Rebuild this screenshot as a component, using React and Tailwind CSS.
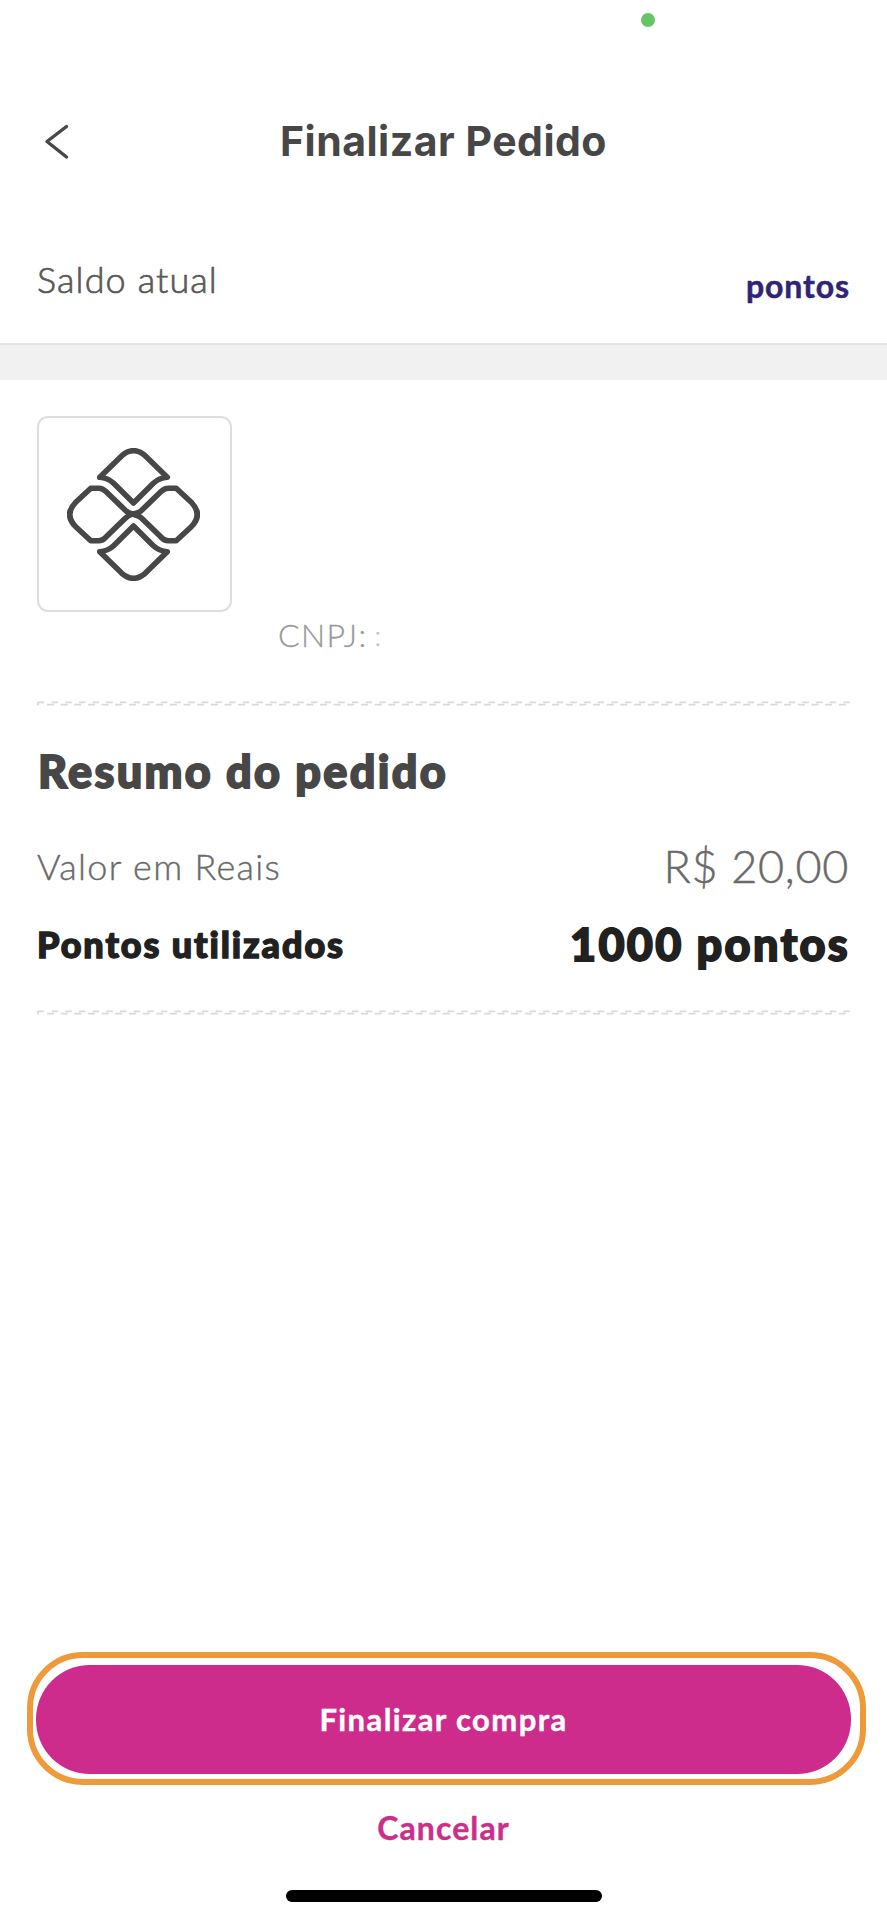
const PixIcon = () => (
  <svg className="mr-[2px] size-[133px]" viewBox="0 0 134 134" fill="none" stroke="#474747" strokeWidth="5.600" strokeLinejoin="round" strokeLinecap="round">
    <path d="M33 29.500 L55 8 Q67 -2.500 79 8 L101 29.500 Q93 30 87 35.500 L67 55.500 L47 35.500 Q41 30 33 29.500 Z" />
    <path d="M33 104.500 L55 126 Q67 136.500 79 126 L101 104.500 Q93 104 87 98.500 L67 78.500 L47 98.500 Q41 104 33 104.500 Z" />
    <path d="M24 40.500 L32 40.500 Q36 40.500 39.500 44 L58.500 62.500 Q61 65.500 66 66.500 Q61 68.500 58.500 71 L39.500 89.500 Q36 93.500 32 93.500 L24 93.500 L8.500 79 Q-3 67 8.500 55 Z" />
    <path d="M110 40.500 L102 40.500 Q98 40.500 94.500 44 L75.500 62.500 Q73 65.500 66 66.500 Q73 68.500 75.500 71 L94.500 89.500 Q98 93.500 102 93.500 L110 93.500 L125.500 79 Q137 67 125.500 55 Z" />
  </svg>
);

const DashedDivider = () => (
  <svg className="block h-[5px] w-[813px]" viewBox="0 0 813 5" fill="none" stroke="#d9d9d9" strokeWidth="1.8">
    <path d="M1 4.500 V1.300 H7" />
    <path d="M10 3.700 H811" strokeDasharray="7 6.65" />
    <path d="M14.700 1.300 H813" strokeDasharray="6.5 7.15" />
  </svg>
);

const App = () => {
  return (
    <div className="flex h-[1920px] w-[887px] flex-col overflow-hidden bg-white font-['Lato',sans-serif]">
      {/* Status bar */}
      <div className="flex h-[80px] pl-[641px] pt-[13px]">
        <span className="size-[14px] rounded-full bg-[#65c466]"></span>
      </div>

      {/* Header */}
      <header className="grid h-[123px] grid-cols-[100px_1fr_100px] items-start">
        <button className="mt-[44px] ml-[43px] w-[26px]">
          <svg className="h-[36px] w-[26px]" viewBox="0 0 26 36" fill="none" stroke="#474747" strokeWidth="3.4" strokeLinecap="round" strokeLinejoin="round">
            <path d="M23.500 2.500 L4 17.500 L23.500 33" />
          </svg>
        </button>
        <h1 className="mt-[36px] text-center font-['Inter',sans-serif] text-[41px] leading-[50px] font-bold tracking-[0.5px] whitespace-nowrap text-[#474747]">
          Finalizar Pedido
        </h1>
      </header>

      {/* Balance */}
      <section className="flex h-[140px] items-start justify-between px-[37px] pt-[52px]">
        <span className="mt-[2px] text-[36px] leading-[44px] font-light tracking-[1.1px] text-[#595959] [-webkit-text-stroke:0.7px]">Saldo atual</span>
        <span className="mt-[11px] text-[32px] leading-[40px] font-bold tracking-[0.9px] text-[#2f2476] [-webkit-text-stroke:0.5px]">pontos</span>
      </section>
      <div className="h-[37px] border-t-2 border-[#e4e4e4] bg-[#f1f1f1]"></div>

      <main className="flex flex-col px-[37px] pt-[36px]">
        <div className="flex h-[285px] items-start">
          <div className="flex h-[196px] w-[195px] items-center justify-center rounded-[11px] border-2 border-[#dedede]">
            <PixIcon />
          </div>
          <div className="mt-[199px] ml-[46px] flex items-center text-[32px] leading-[40px] font-light text-[#999999] [-webkit-text-stroke:0.3px]">
            <span className="tracking-[1.4px]">CNPJ:</span>
            <span className="ml-[7px] text-[28px] text-[#c4c4c4]">:</span>
          </div>
        </div>

        <DashedDivider />

        <h2 className="mt-[38px] ml-px text-[45px] leading-[54px] font-black tracking-[2.3px] text-[#474747] [-webkit-text-stroke:1.8px]">Resumo do pedido</h2>
        <div className="mt-[41px] flex h-[60px] items-start justify-between text-[#6a6a6a]">
          <span className="text-[36px] leading-[54px] font-light tracking-[1.3px] [-webkit-text-stroke:0.4px]">Valor em Reais</span>
          <span className="mr-px text-[45px] leading-[54px] font-light tracking-[0.7px] [-webkit-text-stroke:0.5px]">R$ 20,00</span>
        </div>
        <div className="mt-[18px] flex h-[60px] items-start justify-between text-[#212121]">
          <span className="text-[36px] leading-[54px] font-black tracking-[1.9px] [-webkit-text-stroke:1.4px]">Pontos utilizados</span>
          <span className="text-[45px] leading-[54px] font-black tracking-[2.3px] [-webkit-text-stroke:1.8px]">1000 pontos</span>
        </div>
        <div className="mt-[33px]">
          <DashedDivider />
        </div>
      </main>

      {/* Actions */}
      <footer className="mt-auto flex h-[268px] flex-col">
        <div className="ml-[27px] h-[133px] w-[839px] shrink-0 rounded-[56px] border-[6px] border-[#ee9a3a] pt-[7px] pl-[3px]">
          <button className="h-[109px] w-[815px] rounded-[54px] bg-[#ce2c8c] text-[31px] font-bold tracking-[1.4px] text-white [-webkit-text-stroke:0.4px]">
            Finalizar compra
          </button>
        </div>
        <button className="mt-[23px] h-[40px] text-[32px] leading-[40px] font-bold tracking-[1.1px] text-[#ca3089] [-webkit-text-stroke:0.4px]">Cancelar</button>
        <div className="mt-[42px] ml-[286px] h-[12px] w-[316px] rounded-full bg-black"></div>
      </footer>
    </div>
  );
};

export default App;
